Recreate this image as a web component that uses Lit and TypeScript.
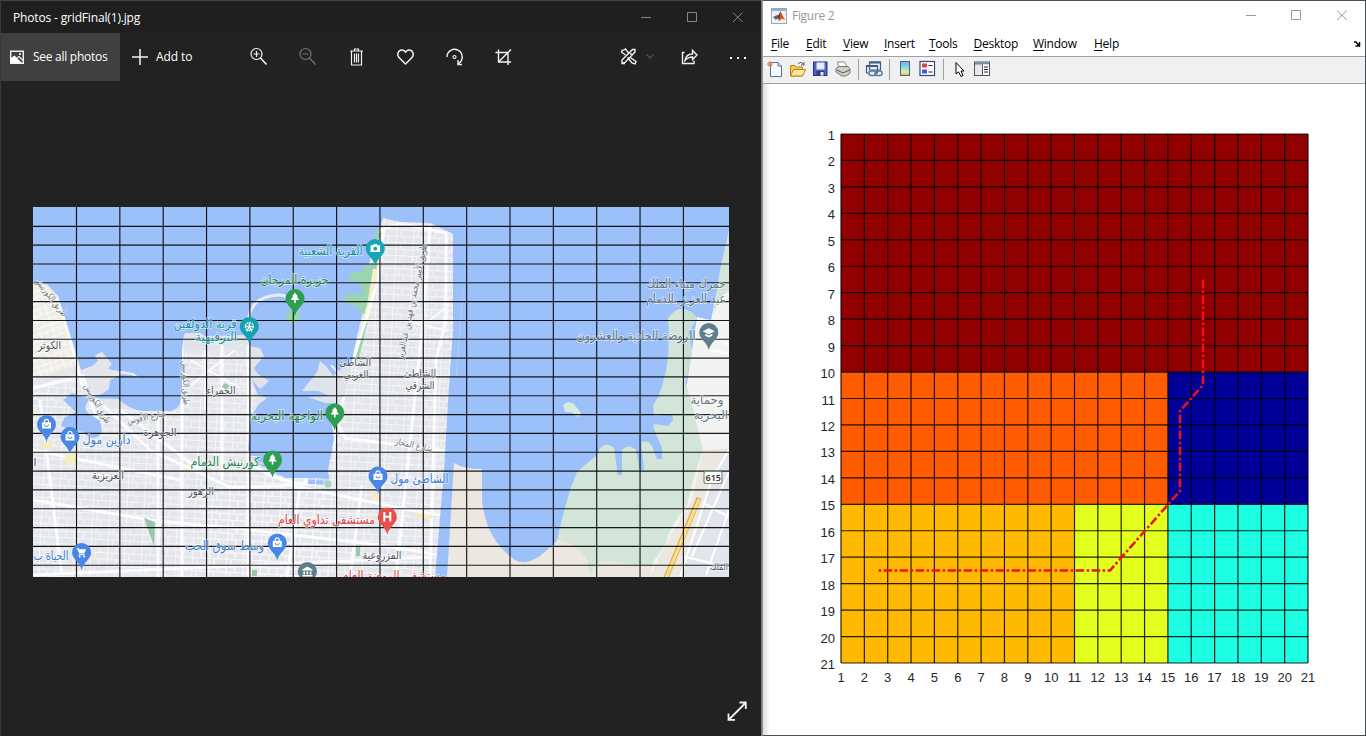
import { LitElement, html, svg, css } from "lit";
import { customElement } from "lit/decorators.js";

/* ---------- map viewer data ---------- */

type Label = { t: string; x: number; y: number; w: number; s?: number; k?: string; r?: number };

const LABELS: Label[] = [
  { t: "القرية الشعبية", x: 330.5, y: 255, w: 64, k: "teal" },
  { t: "جزيرة المرجان", x: 294.5, y: 284, w: 68, k: "green" },
  { t: "قرية الدولفين", x: 205, y: 328, w: 63, k: "teal" },
  { t: "الترفيهية", x: 216, y: 341, w: 42, k: "teal" },
  { t: "جمرك ميناء الملك", x: 686, y: 288, w: 79, k: "slate" },
  { t: "عبد العزيز بالدمام", x: 686, y: 303, w: 80, k: "slate" },
  { t: "الروضة الحادية والعشرون", x: 636, y: 340, w: 119, k: "slate" },
  { t: "الكوثر", x: 49.5, y: 349, w: 23, s: 11 },
  { t: "الحمراء", x: 221, y: 394, w: 29, s: 11 },
  { t: "الشاطئ", x: 355, y: 366, w: 32, s: 11 },
  { t: "الغربي", x: 356, y: 378, w: 25, s: 11 },
  { t: "الشاطئ", x: 420, y: 377, w: 32, s: 11 },
  { t: "الشرقي", x: 420, y: 389, w: 29, s: 11 },
  { t: "الواجهة البحرية", x: 287, y: 420, w: 72, k: "green" },
  { t: "الجوهرة", x: 160, y: 436, w: 33, s: 11 },
  { t: "دارين مول", x: 106.5, y: 444, w: 48, k: "blue" },
  { t: "كورنيش الدمام", x: 225, y: 466, w: 69, k: "green" },
  { t: "العزيزية", x: 108, y: 479, w: 32, s: 11 },
  { t: "الزهور", x: 201, y: 495, w: 26, s: 11 },
  { t: "الشاطئ مول", x: 419.5, y: 483, w: 58, k: "blue" },
  { t: "مستشفى تداوي العام", x: 326.5, y: 524, w: 97, k: "red" },
  { t: "وسط سوق الحب", x: 224.5, y: 550, w: 79, k: "blue" },
  { t: "الحياة ب", x: 51, y: 560, w: 35, k: "blue" },
  { t: "المزروعية", x: 382, y: 559, w: 39, s: 11 },
  { t: "مستشفى الروضة العام", x: 394, y: 580, w: 104, k: "red" },
  { t: "وحماية", x: 707, y: 404, w: 33, s: 12, k: "slate" },
  { t: "البحرية", x: 711, y: 419, w: 34, s: 12, k: "slate" },
  { t: "الملك", x: 719, y: 570, w: 18, s: 9.5 },
  { t: "ا", x: 35, y: 466, w: 3, s: 11 },
  { t: "طريق الكورنيش", x: 49, y: 299, w: 46, s: 9, r: 52, k: "road" },
  { t: "طريق الكورنيش", x: 95, y: 405, w: 44, s: 9, r: 60, k: "road" },
  { t: "طريق الكورنيش", x: 183, y: 383, w: 44, s: 9, r: 88, k: "road" },
  { t: "شارع الأقوس", x: 147, y: 420, w: 39, s: 9, r: -12, k: "road" },
  { t: "شارع المحار", x: 413, y: 448, w: 38, s: 9, r: 12, k: "road" },
  { t: "طريق الأمير محمد بن فهد بن عبدالعزيز", x: 415, y: 302, w: 118, s: 9.5, r: -78, k: "road" },
];

const glyphTree = svg`<path fill="#fff" d="M0-6 L3-2 H1.8 L4.2 1.5 H.8 V4.5 H-.8 V1.5 H-4.2 L-1.8-2 H-3Z"/>`;
const glyphBag = svg`<path fill="#fff" d="M-4.5-2.2h9v6.2h-9Z"/><path fill="none" stroke="#fff" stroke-width="1.2" d="M-2-2v-1.2a2 2 0 0 1 4 0V-2"/><path fill="none" stroke="#4a86e4" d="M-2 0a2 2 0 0 0 4 0"/>`;
const glyphCart = svg`<path fill="#fff" d="M-5-4.5h2l.6 1.2H4.5L2.8 1h-5Z"/><path fill="none" stroke="#fff" d="M-3 2.2H3.2"/><circle cx="-2" cy="4" r="1" fill="#fff"/><circle cx="2.5" cy="4" r="1" fill="#fff"/>`;
const glyphCamera = svg`<path fill="#fff" d="M-4.8-3.2h2.4l1-1.2h2.8l1 1.2h2.4v6.8h-9.6Z"/><circle cx="0" cy=".2" r="1.9" fill="#16a5b4"/>`;
const glyphWheel = svg`<circle r="4" fill="none" stroke="#fff" stroke-width="1.4" stroke-dasharray="1.8 .8"/><path stroke="#fff" stroke-width="1.3" d="M0 0L-2.5 5M0 0L2.5 5M-3 0H3M0-3V0"/>`;
const glyphCap = svg`<path fill="#fff" d="M-6-1.2L0-4.3L6-1.2L0 1.9ZM-3.6 1.2L0 3L3.6 1.2V3.2L0 5L-3.6 3.2Z"/>`;
const glyphH = svg`<path stroke="#fff" stroke-width="2" d="M-3-5V4.5M3-5V4.5M-3-.2H3"/>`;
const glyphBank = svg`<path fill="#fff" d="M-5-2L0-5L5-2V-1H-5ZM-4 0h1.6v3H-4ZM-.8 0H.8v3H-.8ZM2.4 0H4v3H2.4ZM-5 3.6H5V5H-5Z"/>`;

const PINS: [number, number, string, unknown][] = [
  [375.3, 248.5, "#16a5b4", glyphCamera],
  [295, 298.5, "#2f9e50", glyphTree],
  [249.3, 326.5, "#16a0ad", glyphWheel],
  [708.8, 332.5, "#607d8b", glyphCap],
  [334.8, 413, "#2f9e50", glyphTree],
  [272.5, 460, "#2f9e50", glyphTree],
  [378, 476, "#4a86e4", glyphBag],
  [387.3, 517, "#e8504a", glyphH],
  [277.3, 543, "#4a86e4", glyphBag],
  [307.4, 571.5, "#607d8b", glyphBank],
  [46.5, 424.5, "#4a86e4", glyphBag],
  [70, 436.5, "#4a86e4", glyphBag],
  [81.6, 552.5, "#4a86e4", glyphCart],
];

@customElement("map-photo")
class MapPhoto extends LitElement {
  static styles = css`
    :host { display: block; width: 696px; height: 370px; }
    svg { display: block; }
    text { font-family: "DejaVu Sans", "Noto Sans", sans-serif; fill: #4f545b; stroke: #fff; stroke-opacity: 0.6; stroke-width: 1.6px; paint-order: stroke; text-anchor: middle; }
    .teal { fill: #16939f; }
    .green { fill: #26874a; }
    .slate { fill: #5f7784; }
    .blue { fill: #3f7fd0; }
    .red { fill: #dc453f; }
    .road { fill: #70757c; }
    .shield { fill: #333; stroke: none; font-family: "Noto Sans", sans-serif; font-size: 9px; font-weight: 600; }
  `;

  render() {
    const vs = Array.from({ length: 15 }, (_, i) => 76.5 + i * 43.35);
    const hs = Array.from({ length: 19 }, (_, i) => 226.3 + i * 18.83);
    const pen = "M383 218L400 222L430 223L453 234V330L448 400L444 470L435 577H200V480L330 485L328 470L334 440L332 425L325 412L338 402L345 395L350 375L354 350L362 315L370 260Z";
    const town = "M33 282L47 284L58 296L67 325L75 350L81 370L92 366L98 361L95 355L102 352L112 364L108 369L124 372L136 376L123 374L110 380L109 389L102 394L90 398L118 399L128 406L140 411H170L180 403L182 388V352L184 334L200 333L205 336L248 335L252 350L252 380L258 395L267 398L258 405L252 415L249 430L248 450L255 462L268 470L285 478H308V577H33Z";
    return html`
      <svg width="696" height="370" viewBox="33 207 696 370">
        <defs>
          <pattern id="blocks" width="17" height="13" patternUnits="userSpaceOnUse" patternTransform="rotate(3)">
            <path d="M0 .5H17M0 7H17M.5 0V13M9 7V13M5 0V7" fill="none" stroke="#f5f6f8" stroke-width="1"/>
          </pattern>
          <pattern id="slant" width="13" height="12" patternUnits="userSpaceOnUse" patternTransform="rotate(-18)">
            <path d="M0 .5H13M0 6H13M.5 0V12M7 6V12" fill="none" stroke="#fbfaf8" stroke-width="1"/>
          </pattern>
          <clipPath id="land"><path d=${town}/><path d=${pen}/></clipPath>
        </defs>
        <rect x="33" y="207" width="696" height="370" fill="#9cc0f9"/>
        <path fill="#e4e6eb" d=${town}/>
        <path fill="#e4e6eb" d=${pen}/>
        <path fill="#efede8" d="M33 284L47 286L57 297L77 365L33 380Z"/>
        <path fill="url(#slant)" d="M33 284L47 286L57 297L77 365L33 380Z"/>
        <path fill="url(#blocks)" d=${pen}/>
        <path fill="url(#blocks)" d="M33 385L75 375L90 400L128 410H182V352H250V380L258 400L248 430V450L285 478H330V577H33Z"/>
        <path fill="#dfe3ea" d="M185 333L200 333L205 336H247V342Q225 351 185 350Z"/>
        <path fill="#dfe3ea" d="M302 391L317 372L320 361L327 367L333 376L344 366L352 363L345 403H325L308 397L330 396L318 391Z"/>
        <path fill="#dfe3ea" d="M250 346L260 348L264 356L254 368L258 374L269 381L260 389L252 380Z"/>
        <path fill="none" stroke="#e9edf2" stroke-width="3" d="M249 334Q245 305 264 298Q288 289 296 307"/>
        <path fill="none" stroke="#e9edf2" stroke-width="2" d="M110 376L122 372L133 374L137 377M345 380L331 365"/>
        <circle cx="293" cy="317" r="7" fill="#9bd5b0"/>
        <path fill="#9bd5b0" d="M380 228L375 232L374 240L380 238ZM377 264Q365 262 362 272Q348 270 348 280L360 282L363 296Q347 290 344 298Q346 305 356 306L365 316L354 356L359 358L373 300Z"/>
        <path fill="#f5efcb" d="M373 269H378L374 300L369 323L362 321L367 305Z"/>
        <g clip-path="url(#land)" fill="none" stroke="#fbfcfd" stroke-width="3">
          <path d="M378 232Q390 223 407 225L446 233V320L436 360L430 577M384 225L378 280L348 377L338 425L345 438L454 452M338 438L300 488L287 577M58 294L82 385L150 450L230 487L285 486M33 388L83 376L100 430M33 500L150 520L250 530L380 545L440 555M40 400L62 577M33 450L180 480M120 410L200 470M158 415V577M182 335V577M248 345V577M33 575L430 557M284 484L420 512L440 515M250 462Q275 484 316 484M222 345V480M362 485L350 577M430 225L423 320L396 577"/>
          <path stroke-width="2" d="M190 360L240 388M190 386L235 350M205 350V410M430 320L449 305M415 323L448 331"/>
        </g>
        <path fill="#9cc0f9" d="M63 400L72 393L90 399Q82 407 88 413L99 420Q105 431 98 437Q88 440 84 432Q70 430 61 426L64 418L76 412Z"/>
        <path fill="#9cc0f9" d="M118 390H181L180 404Q176 411 168 411H145Q128 410 118 398Z"/>
        <path fill="#9cc6a9" d="M144 518L155 522L154 546ZM224 383l5 2-2 5-5-3ZM252 570h5v6h-5ZM356 547h4v9h-4Z"/>
        <circle cx="328" cy="484" r="3.5" fill="#a9d3bb"/>
        <path fill="#f6ecc4" d="M65 454h11v11H65ZM43 440l10 3-4 8-9-4ZM372 492l8 3-2 6-7-2ZM415 512l18 4-1 3-18-2Z"/>
        <path fill="none" stroke="#b2cef6" d="M463 290L456 380"/>

        <path fill="#ece8e1" d="M454 463Q464 469 482 469L482 500Q486 540 515 560Q525 566 540 556L556 542L590 490H729V577H447Z"/>
        <path fill="#f3f3f2" d="M697 317L711 320L729 232V577H650L680 430Z"/>
        <path fill="#d2e5d8" d="M729 230V290L720 298L713 315L720 270Z"/>
        <path fill="#ece8e1" d="M703 450L692 500L665 545L650 577H690L729 448Z"/>
        <path fill="#d2e5d8" d="M557 540L563 515L570 490L577 472L597 455L600 448Q607 441 614 448L618 475H622L622 450Q628 443 636 450L640 470H644L641 442Q650 440 654 446L658 459H662L660 446L653 428L654 424L668 426L673 420L672 414L654 416L653 405L658 397Q672 365 668 318Q675 308 683 309Q693 311 697 318L688 333L692 350L690 365L684 377L690 397L703 450L693 480L687 506Q671 523 665 545L650 566L610 561Q600 560 594 568L590 576L587 560Q575 541 557 540Z"/>
        <path fill="#9cc0f9" d="M616 444L622 446V473Q620 476 617 473ZM636 440L641 442L643 470L639 468ZM652 422L655 432L662 448V459H657L652 446L645 438Z"/>
        <path fill="#c8e0d3" d="M682 310Q693 311 697 318L688 333L692 350L687 378L684 385Z"/>
        <path fill="#d7ebdb" d="M563 405Q568 400 574 404L581 413Q581 418 576 416L571 412L565 412Z"/>
        <path fill="#e2e5eb" d="M729 452L716 470L681 577H729Z"/>
        <path fill="none" stroke="#fff" stroke-width="2" d="M729 450L712 479L680 577M703 503L729 517M729 472L692 556M729 510L706 575M683 556L729 568M711 334L729 345M711 350L729 354"/>
        <path stroke="#dfaa45" stroke-width="5" d="M699 498L666 578"/>
        <path stroke="#fbe08d" stroke-width="3" d="M699 499L666 578"/>

        <g stroke="#000" stroke-opacity=".9" stroke-width="1.15">
          ${vs.map((x) => svg`<path d="M${x} 207V577"/>`)}
          ${hs.map((y) => svg`<path d="M33 ${y}H729"/>`)}
        </g>

        <rect x="704" y="471.500" width="18" height="12" rx="2" fill="#fff" stroke="#78906a" stroke-width="1.200"/>
        <text class="shield" x="713.3" y="481">615</text>
        ${LABELS.map(
          (l) => svg`<text class=${l.k ?? ""} x=${l.x} y=${l.y} font-size=${l.s ?? 12.5} textLength=${l.w}
            lengthAdjust="spacingAndGlyphs" transform="rotate(${l.r ?? 0} ${l.x} ${l.y})">${l.t}</text>`
        )}
        ${PINS.map(
          ([x, y, c, g]) => svg`<g transform="translate(${x} ${y})">
            <path fill=${c} d="M0 17.500C-2 9-9.500 7-9.500 0A9.500 9.500 0 0 1 9.500 0C9.500 7 2 9 0 17.500Z"/>${g}</g>`
        )}
      </svg>`;
  }
}

/* ---------- photos window ---------- */

@customElement("photos-window")
class PhotosWindow extends LitElement {
  static styles = css`
    :host { box-sizing: border-box; display: flex; flex-direction: column; width: 761px; height: 736px; background: #222; color: #fff;
      border-top: 1px solid #3d4347; border-left: 1px solid #343b40; font: 12px "Open Sans", "Noto Sans", sans-serif; }
    svg { display: block; fill: none; stroke: #f2f2f2; stroke-width: 1.2; }
    .title { display: flex; height: 32px; background: #1f1f1f; align-items: center; }
    .name { flex: 1; padding-left: 12px; letter-spacing: -0.16px; }
    .controls { stroke: #858585; stroke-width: 1; }
    .bar { display: flex; height: 48px; align-items: center; }
    .all { box-sizing: border-box; display: flex; align-items: center; width: 119px; height: 48px; background: #404040; padding: 0 0 1px 8px; gap: 8px; letter-spacing: -0.27px; white-space: nowrap; }
    .add { box-sizing: border-box; display: flex; align-items: center; width: 114px; height: 48px; padding: 0 0 1px 12px; gap: 8px; letter-spacing: -0.1px; }
    .spacer { flex: 1; }
    .stage { flex: 1; display: flex; padding: 126px 0 0 32px; }
    .foot { display: flex; justify-content: flex-end; padding: 0 12px 13px 0; }
  `;

  render() {
    return html`
      <div class="title">
        <span class="name">Photos - gridFinal(1).jpg</span>
        <svg class="controls" width="138" height="32">
          <path d="M18 16.500H28M64.500 11.500H73.500V20.500H64.500ZM110 11.500L119.500 21M119.500 11.500L110 21"/>
        </svg>
      </div>
      <div class="bar">
        <div class="all">
          <svg width="16" height="16"><path stroke-width="1.4" d="M1.700 2.200H14.300V14.300H1.700Z"/><path fill="#fff" stroke="none" d="M2 14V9L5.500 6.500L13 14Z"/><path stroke-width="1.100" d="M8 9L10 7.500L14 11.500"/><circle cx="11" cy="5" r="1.100" fill="#fff" stroke="none"/></svg>
          <span>See all photos</span>
        </div>
        <div class="add">
          <svg width="16" height="16"><path stroke-width="1.500" d="M0 8H16M8 0V16"/></svg>
          <span>Add to</span>
        </div>
        ${[
          svg`<circle cx="22.500" cy="21.500" r="5.500"/><path stroke-width="1.600" d="M26.500 25.500L32.500 32"/><path d="M19.500 21.500H25.500M22.500 18.500V24.500"/>`,
          svg`<g stroke="#777"><circle cx="22.500" cy="21.500" r="5.500"/><path d="M26.500 25.500L32.500 32M19.500 21.500H25.500"/></g>`,
          svg`<path d="M18 18.500H31M19.500 18.500V32.500H29.500V18.500M22.500 18V16.500H26.500V18M22.500 21V30M24.500 21V30M26.500 21V30"/>`,
          svg`<path stroke-width="1.500" d="M24.500 31.500L18 25Q15.500 21.500 18 18.700Q21.500 15.800 24.500 19.500Q27.500 15.800 31 18.700Q33.500 21.500 31 25Z"/>`,
          svg`<path stroke-width="1.400" d="M17 24.500A7.600 7.600 0 1 1 28.500 31M28 27.500V32H32"/><circle cx="24.500" cy="24.500" r="1.500"/>`,
          svg`<path stroke-width="1.400" d="M19.500 17V29.500H32M16.500 20H29V32.500M19.500 29.500L32 17"/>`,
        ].map((g) => html`<svg width="49" height="48" viewBox="0 .5 49 48">${g}</svg>`)}
        <span class="spacer"></span>
        <svg width="61" height="48" viewBox="0 1 61 48">
          <path stroke-width="1.400" d="M19 18.500L21.500 17L24.500 21M25.500 25L32 29.500L31 32L28 31L23.500 25.500M18.500 17.500L17.500 20L21.500 23M18 31.500V28L28.500 17.500H31V20L21 30.500ZM25.500 20.500L28 23M17.500 31.500H21"/>
          <path stroke="#555" d="M42.500 22.500L46 26L49.500 22.500"/>
        </svg>
        <svg width="48" height="48" viewBox="-.5 .5 48 48"><path stroke-width="1.400" d="M19 20H17V31H28.500V28M19.500 28Q20.500 21.500 27 21.500V18L31.500 22.500L27 27V24.500Q22.500 24.500 19.500 28Z"/></svg>
        <svg width="48" height="48"><path fill="#fff" stroke="none" d="M17 24h2v2h-2ZM24 24h2v2h-2ZM31 24h2v2h-2Z"/></svg>
      </div>
      <div class="stage"><map-photo></map-photo></div>
      <div class="foot">
        <svg width="24" height="24"><path stroke-width="1.800" d="M4 20.500L20.500 4M14.500 3.500H20.800V10M3.500 14.500V20.800H10"/></svg>
      </div>`;
  }
}

/* ---------- figure window ---------- */

const MENUS: [string, number][] = [["File", 35], ["Edit", 37], ["View", 41], ["Insert", 45], ["Tools", 44.5], ["Desktop", 59.5], ["Window", 61], ["Help", 60]];

/* zones of the cost grid: col, row, columns, rows, colour */
const ZONES: [number, number, number, number, string][] = [
  [0, 0, 20, 9, "#910000"],
  [0, 9, 14, 5, "#ff5b00"],
  [14, 9, 6, 5, "#000096"],
  [0, 14, 10, 6, "#ffb900"],
  [10, 14, 4, 6, "#e2ff1d"],
  [14, 14, 6, 6, "#1dffe2"],
];

@customElement("figure-window")
class FigureWindow extends LitElement {
  static styles = css`
    :host { box-sizing: border-box; display: flex; flex-direction: column; width: 603px; height: 736px; background: #fff;
      border: solid #4a4f56; border-width: 1px 1px 1px 0; font: 12px "Open Sans", "Noto Sans", sans-serif; color: #000; }
    svg { display: block; }
    .title { box-sizing: border-box; display: flex; align-items: center; height: 31px; color: #999; padding: 0 0 2px 8px; gap: 5px; letter-spacing: -0.3px; }
    .title span { flex: 1; }
    .menu { box-sizing: border-box; display: flex; align-items: center; height: 25px; padding: 0 4px 1px 8px; letter-spacing: -0.25px; border-bottom: 1px solid #a0a0a0; }
    .item { display: block; flex: none; white-space: nowrap; }
    .item::first-letter { text-decoration: underline; text-underline-offset: 2px; }
    .grow { flex: 1; }
    .tools { display: flex; align-items: center; height: 26px; background: #f0f0f0; border-bottom: 1px solid #a0a0a0; }
    .axes { font: 13px "Liberation Sans", Arial, sans-serif; fill: #262626; }
  `;

  render() {
    const X = (n: number) => 841 + (n - 1) * 23.35;
    const Y = (n: number) => 134 + (n - 1) * 26.45;
    const ticks = Array.from({ length: 21 }, (_, i) => i + 1);
    const sep = html`<svg width="9" height="26"><path stroke="#a0a0a0" d="M4.500 2V23"/></svg>`;
    const tool = (w: number, g: unknown) => html`<svg width=${w} height="26" viewBox="${-w / 2} -12 ${w} 26" fill="none">${g}</svg>`;
    return html`
      <div class="title">
        <svg width="16" height="16"><rect x=".5" y=".5" width="15" height="15" fill="#eef2f6" stroke="#98a8b8"/><path fill="#8fb3d4" d="M1 1h14v2H1Z"/><path fill="#3d6b9c" d="M2 9L6 7L8 8L5 12Z"/><path fill="#d9531e" d="M6 10L9.500 3.500L14 12L11 10.500L8 13Z"/><path fill="#7c2a12" d="M6 10L9.500 3.500L8.500 10Z"/></svg>
        <span>Figure 2</span>
        <svg width="119" height="29"><path fill="none" stroke="#999" d="M0 14.500H10M45.500 9.500H54.500V18.500H45.500ZM91 9.500L101 19M101 9.500L91 19"/></svg>
      </div>
      <div class="menu">
        ${MENUS.map(([m, w]) => html`<span class="item" style="width:${w}px">${m}</span>`)}
        <span class="grow"></span>
        <svg width="8" height="8"><path fill="none" stroke="#000" stroke-width="1.500" d="M1 2H3L6 5.500M6.500 2V6H2.500"/></svg>
      </div>
      <div class="tools">
        ${tool(24, svg`<path fill="#f7faff" stroke="#52749d" d="M-4.500-6.500H3L6.500-3V7.500H-4.500Z"/><path fill="#c9daf0" stroke="#52749d" d="M3-6.500V-3H6.500"/><path stroke="#d97740" d="M-5-8V-2M-8-5H-2M-7-7L-3-3M-3-7L-7-3"/>`)}
        ${tool(22, svg`<path fill="#f5cd58" stroke="#b98318" d="M-7.500 7V-3.500H-3L-1.500-2H4.500V7Z"/><path fill="#ffe89b" stroke="#b98318" d="M-7.500 7L-4.500 .5H7.500L4.500 7Z"/><path stroke="#44607f" d="M0-5.500Q3-8 5.500-5M6-7V-4H3"/>`)}
        ${tool(23, svg`<rect x="-7" y="-7" width="13.500" height="13.500" fill="#4f62cc" stroke="#26308b"/><rect x="-4" y="-6.500" width="8" height="7" fill="#e7ecfb"/><rect x="-4" y="2" width="8" height="4.500" fill="#343b78"/><rect x="0" y="3" width="3" height="3.500" fill="#e4e6ee"/>`)}
        ${tool(22, svg`<path fill="#fff" stroke="#889" d="M-4.500-1L-5.500-7H1.500L4.500-1Z"/><path fill="#cfcfcf" stroke="#777" d="M-7-.5L-4-2.500H5L7 0V4L3 7H-1L-7 3Z"/><path stroke="#555" d="M-6 1L0 4L6.500 1"/><path fill="#eedf75" d="M0 4.500h4v1.500H0Z"/>`)}
        ${sep}
        ${tool(22, svg`<path fill="#e8eef6" stroke="#3e5d88" stroke-width="1.200" d="M-4.500-7H6.500V1H-4.500ZM-7.500-3.500H3.500V4H-7.500Z"/><path stroke="#3e5d88" stroke-width="2" d="M-4.500-6.500H6.500M-7.500-3H3.500"/><rect x="-5" y="2" width="7" height="4.500" rx="2" fill="#e8eef6" stroke="#59799e" stroke-width="1.500"/><rect x="1" y="2" width="7" height="4.500" rx="2" stroke="#59799e" stroke-width="1.500"/>`)}
        ${sep}
        ${tool(22, svg`<defs><linearGradient id="cb" x2="0" y2="1"><stop offset="0" stop-color="#8f9bf0"/><stop offset=".45" stop-color="#7de2e8"/><stop offset=".75" stop-color="#f0ec88"/><stop offset="1" stop-color="#f0a070"/></linearGradient></defs><rect x="-4.500" y="-7.500" width="9" height="14" fill="url(#cb)" stroke="#42658f"/>`)}
        ${tool(23, svg`<rect x="-7.500" y="-7.500" width="14.500" height="14" fill="#fff" stroke="#334b78" stroke-width="1.200"/><path fill="#e0433e" d="M-5.500-5.500h5v4h-5Z"/><path fill="#4a55dd" d="M-5.500 .5h5v4h-5Z"/><path stroke="#222" d="M1-3.500H5M1 3H5"/>`)}
        ${sep}
        ${tool(23, svg`<path fill="#fff" stroke="#000" d="M-3.500-6.500V5L-1 2.800L1.500 7.500L3.500 6.500L1.500 2H4.500Z"/>`)}
        ${tool(22, svg`<rect x="-7.500" y="-7" width="15" height="13.500" fill="#e8e8e8" stroke="#50565e"/><path fill="#6b8cb2" d="M-7-6.500h14v2H-7Z"/><path stroke="#50565e" d="M.5-4.500V6.500"/><path fill="#fff" d="M1-4.500H7V6H1Z"/><path stroke="#222" d="M2-2H6M2 .5H6M2 3H6"/>`)}
      </div>
      <svg width="602" height="651" viewBox="763 84 602 651">
        <defs><linearGradient id="edge"><stop offset="0" stop-color="#ddd"/><stop offset="1" stop-color="#fff"/></linearGradient></defs>
        <rect x="763" y="84" width="7" height="651" fill="url(#edge)"/>
        ${ZONES.map(([c, r, w, h, f]) => svg`<rect x=${X(c + 1)} y=${Y(r + 1)} width=${w * 23.35} height=${h * 26.45} fill=${f}/>`)}
        <g stroke="#000" stroke-opacity=".85" stroke-width="1.200">
          ${ticks.map((n) => svg`<path d="M${X(n)} 134V663M841 ${Y(n)}H1308"/>`)}
        </g>
        <path fill="none" stroke="#f00f14" stroke-width="2.600" stroke-dasharray="8.500 2.500 2.500 2.500" d="M1203 279.500V385L1180 411V491L1110 570.500H877.500"/>
        <g class="axes">
          ${ticks.map((n) => svg`<text x="835" y=${Y(n) + 6} text-anchor="end">${n}</text><text x=${X(n)} y="682.300" text-anchor="middle">${n}</text>`)}
        </g>
      </svg>`;
  }
}

@customElement("app-root")
class AppRoot extends LitElement {
  static styles = css`
    :host { display: flex; width: 1366px; height: 736px; overflow: hidden; background: #222; }
    .gutter { width: 2px; background: linear-gradient(90deg, #66696c, #a4a4a4); }
  `;
  render() {
    return html`<photos-window></photos-window><div class="gutter"></div><figure-window></figure-window>`;
  }
}
